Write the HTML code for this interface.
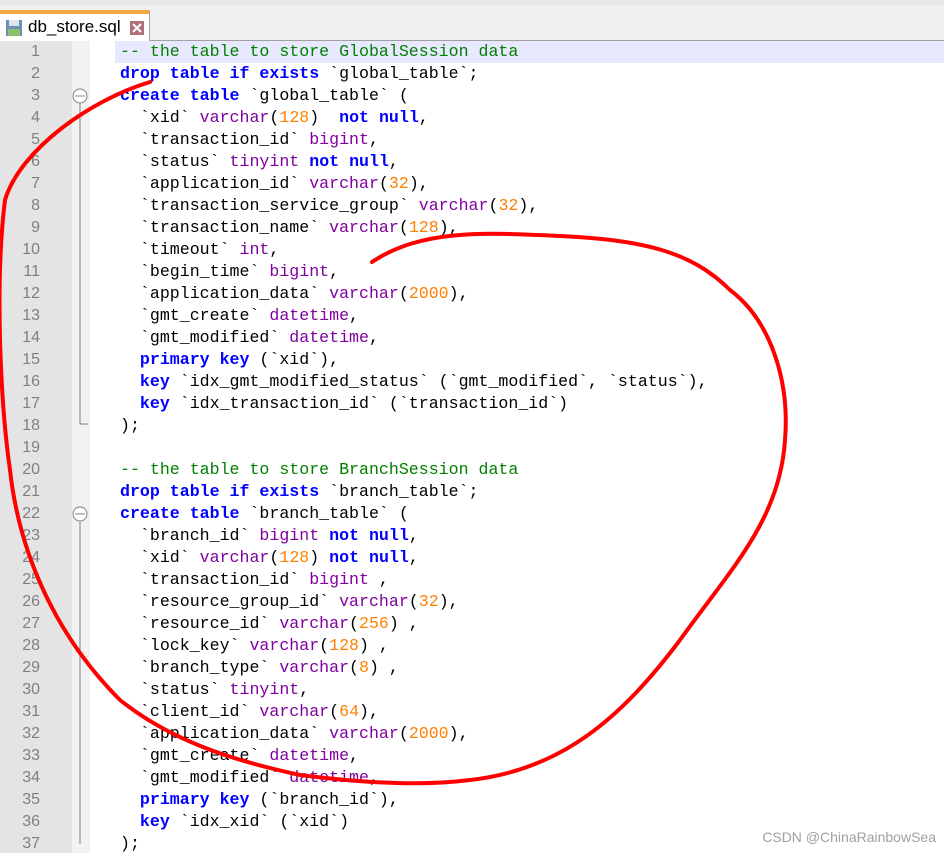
<!DOCTYPE html>
<html><head><style>
body{margin:0;width:944px;height:853px;overflow:hidden;background:#fff;font-family:"Liberation Mono",monospace;position:relative}
#top{position:absolute;left:0;top:0;width:944px;height:40px;background:#f0f0f0;border-bottom:1px solid #a0a0a0}
#tab{position:absolute;left:0;top:10px;width:150px;height:31px;background:#fff;border-top:4px solid #f5a742;border-right:1px solid #a0a0a0;box-sizing:border-box;font-family:"Liberation Sans",sans-serif;font-size:17px}
#gut{position:absolute;left:0;top:41px;width:72px;height:812px;background:#e4e4e4}
#fold{position:absolute;left:72px;top:41px;width:18px;height:812px;background:#f2f2f2}
.ln{position:absolute;left:0;width:40px;text-align:right;color:#808080;font-size:16px;font-family:"Liberation Sans",sans-serif}
.l{position:absolute;left:120px;white-space:pre;font-size:16.6px;color:#000;line-height:22px}
.k{color:#0000ff;font-weight:bold}.c{color:#008000}.t{color:#8000a0}.n{color:#ff8000}
</style></head><body>
<div id="top">
<div style="position:absolute;left:0;top:0;width:944px;height:5px;background:#e8e8e8"></div>
<div id="tab"><svg style="position:absolute;left:5px;top:5px" width="18" height="18"><rect x="1" y="1" width="16" height="16" fill="#6d8fb8"/><rect x="4" y="1" width="10" height="6" fill="#dde6f0"/><rect x="3" y="10" width="12" height="7" fill="#8cc06a"/></svg><span style="position:absolute;left:28px;top:3px">db_store.sql</span><svg style="position:absolute;left:130px;top:7px" width="14" height="14"><rect width="14" height="14" fill="#b0707a"/><path d="M3 3L11 11M11 3L3 11" stroke="#fff" stroke-width="2"/></svg></div>
</div>
<div id="gut"></div><div id="fold"></div>
<div style="position:absolute;left:115px;top:41px;width:829px;height:22px;background:#e8e8ff"></div>
<div id="code"></div>
<svg style="position:absolute;left:0;top:0" width="944" height="853">
<g stroke="#808080" fill="#fff"><circle cx="80" cy="96" r="7"/><line x1="75" y1="96" x2="85" y2="96"/><circle cx="80" cy="514" r="7"/><line x1="75" y1="514" x2="85" y2="514"/></g>
<path d="M80 103V424H88M80 521V844" stroke="#808080" fill="none"/>
<path d="M150 82C90 100 20 150 5 200C-5 280 0 400 10 470C20 560 60 640 120 700C170 740 230 760 300 775C380 785 430 785 470 780C560 770 620 720 680 640C730 570 780 520 785 440C790 380 770 320 730 290C690 250 640 240 560 236C480 232 420 230 372 262" stroke="#f00" stroke-width="4" fill="none" stroke-linecap="round"/>
</svg>
<div style="position:absolute;right:8px;bottom:8px;color:#a0a0a0;font-family:'Liberation Sans',sans-serif;font-size:14px">CSDN @ChinaRainbowSea</div>
<script>
const L=[
'<span class="c">-- the table to store GlobalSession data</span>',
'<span class="k">drop table if exists</span> `global_table`;',
'<span class="k">create table</span> `global_table` (',
'  `xid` <span class="t">varchar</span>(<span class="n">128</span>)  <span class="k">not null</span>,',
'  `transaction_id` <span class="t">bigint</span>,',
'  `status` <span class="t">tinyint</span> <span class="k">not null</span>,',
'  `application_id` <span class="t">varchar</span>(<span class="n">32</span>),',
'  `transaction_service_group` <span class="t">varchar</span>(<span class="n">32</span>),',
'  `transaction_name` <span class="t">varchar</span>(<span class="n">128</span>),',
'  `timeout` <span class="t">int</span>,',
'  `begin_time` <span class="t">bigint</span>,',
'  `application_data` <span class="t">varchar</span>(<span class="n">2000</span>),',
'  `gmt_create` <span class="t">datetime</span>,',
'  `gmt_modified` <span class="t">datetime</span>,',
'  <span class="k">primary key</span> (`xid`),',
'  <span class="k">key</span> `idx_gmt_modified_status` (`gmt_modified`, `status`),',
'  <span class="k">key</span> `idx_transaction_id` (`transaction_id`)',
');',
'',
'<span class="c">-- the table to store BranchSession data</span>',
'<span class="k">drop table if exists</span> `branch_table`;',
'<span class="k">create table</span> `branch_table` (',
'  `branch_id` <span class="t">bigint</span> <span class="k">not null</span>,',
'  `xid` <span class="t">varchar</span>(<span class="n">128</span>) <span class="k">not null</span>,',
'  `transaction_id` <span class="t">bigint</span> ,',
'  `resource_group_id` <span class="t">varchar</span>(<span class="n">32</span>),',
'  `resource_id` <span class="t">varchar</span>(<span class="n">256</span>) ,',
'  `lock_key` <span class="t">varchar</span>(<span class="n">128</span>) ,',
'  `branch_type` <span class="t">varchar</span>(<span class="n">8</span>) ,',
'  `status` <span class="t">tinyint</span>,',
'  `client_id` <span class="t">varchar</span>(<span class="n">64</span>),',
'  `application_data` <span class="t">varchar</span>(<span class="n">2000</span>),',
'  `gmt_create` <span class="t">datetime</span>,',
'  `gmt_modified` <span class="t">datetime</span>,',
'  <span class="k">primary key</span> (`branch_id`),',
'  <span class="k">key</span> `idx_xid` (`xid`)',
');'];
let h='';L.forEach((s,i)=>{const t=41+i*22;h+=`<div class="ln" style="top:${t+2}px">${i+1}</div><div class="l" style="top:${t}px">${s}</div>`});
document.getElementById('code').innerHTML=h;
</script>
</body></html>
